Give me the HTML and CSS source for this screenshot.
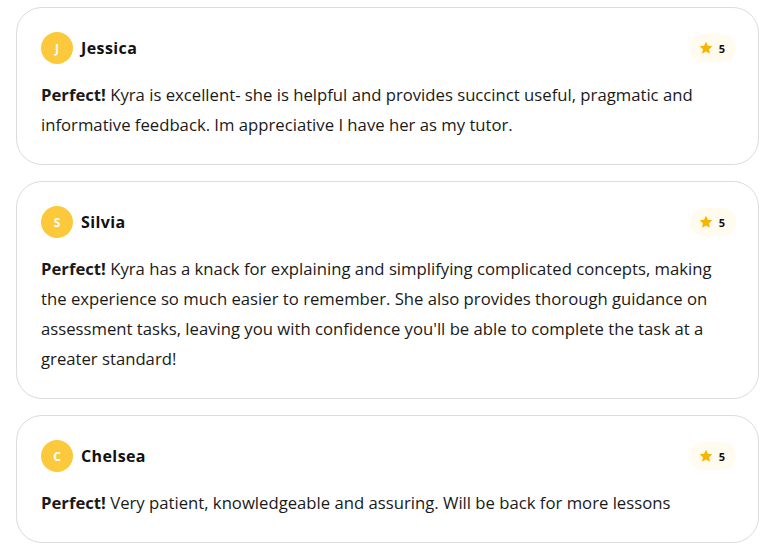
FILE: index.html
```html
<!DOCTYPE html>
<html lang="en">
<head>
<meta charset="utf-8">
<title>Reviews</title>
<link rel="stylesheet" href="styles.css">
</head>
<body>
<div class="reviews">
  <div class="card">
    <div class="head">
      <div class="who"><span class="avatar">J</span><span class="name">Jessica</span></div>
      <div class="rating"><svg class="star" viewBox="0 0 24 24"><path d="M12 2.5l2.9 6.1 6.6.8-4.9 4.6 1.3 6.6L12 17.3l-5.9 3.3 1.3-6.6-4.9-4.6 6.6-.8z"/></svg><span>5</span></div>
    </div>
    <p class="text"><b>Perfect!</b> Kyra is excellent- she is helpful and provides succinct useful, pragmatic and informative feedback. Im appreciative I have her as my tutor.</p>
  </div>
  <div class="card">
    <div class="head">
      <div class="who"><span class="avatar">S</span><span class="name">Silvia</span></div>
      <div class="rating"><svg class="star" viewBox="0 0 24 24"><path d="M12 2.5l2.9 6.1 6.6.8-4.9 4.6 1.3 6.6L12 17.3l-5.9 3.3 1.3-6.6-4.9-4.6 6.6-.8z"/></svg><span>5</span></div>
    </div>
    <p class="text"><b>Perfect!</b> Kyra has a knack for explaining and simplifying complicated concepts, making the experience so much easier to remember. She also provides thorough guidance on assessment tasks, leaving you with confidence you'll be able to complete the task at a greater standard!</p>
  </div>
  <div class="card">
    <div class="head">
      <div class="who"><span class="avatar">C</span><span class="name">Chelsea</span></div>
      <div class="rating"><svg class="star" viewBox="0 0 24 24"><path d="M12 2.5l2.9 6.1 6.6.8-4.9 4.6 1.3 6.6L12 17.3l-5.9 3.3 1.3-6.6-4.9-4.6 6.6-.8z"/></svg><span>5</span></div>
    </div>
    <p class="text"><b>Perfect!</b> Very patient, knowledgeable and assuring. Will be back for more lessons</p>
  </div>
</div>
</body>
</html>
```
FILE: styles.css
```css
html, body { margin: 0; padding: 0; background: #fff; }
body {
  font-family: "Open Sans", "Liberation Sans", sans-serif;
  color: #1a1a1a;
}
.reviews {
  padding: 7px 17px 0 16px;
  display: flex;
  flex-direction: column;
  gap: 16px;
}
.card {
  border: 1px solid #dcdcdc;
  border-radius: 26px;
  padding: 24px;
}
.head {
  display: flex;
  align-items: center;
  justify-content: space-between;
  height: 32px;
  margin-bottom: 16px;
}
.who { display: flex; align-items: center; gap: 8px; }
.avatar {
  width: 32px; height: 32px; border-radius: 50%;
  background: #fcc93c; color: #fff;
  display: flex; align-items: center; justify-content: center;
  font-weight: 700; font-size: 12px;
}
.name { font-weight: 700; font-size: 16px; letter-spacing: 0.4px; color: #111; }
.rating {
  display: flex; align-items: center; gap: 5px;
  background: #fffbef;
  border-radius: 14px;
  padding: 6px 11px 6px 8px;
  margin-right: -2px;
  font-size: 11px; font-weight: 700; color: #111;
}
.star { width: 16px; height: 16px; fill: #f7b500; }
.text {
  margin: 0;
  font-size: 16.7px;
  line-height: 30px;
  color: #1a1a1a;
}
.text b { font-weight: 700; }
```
